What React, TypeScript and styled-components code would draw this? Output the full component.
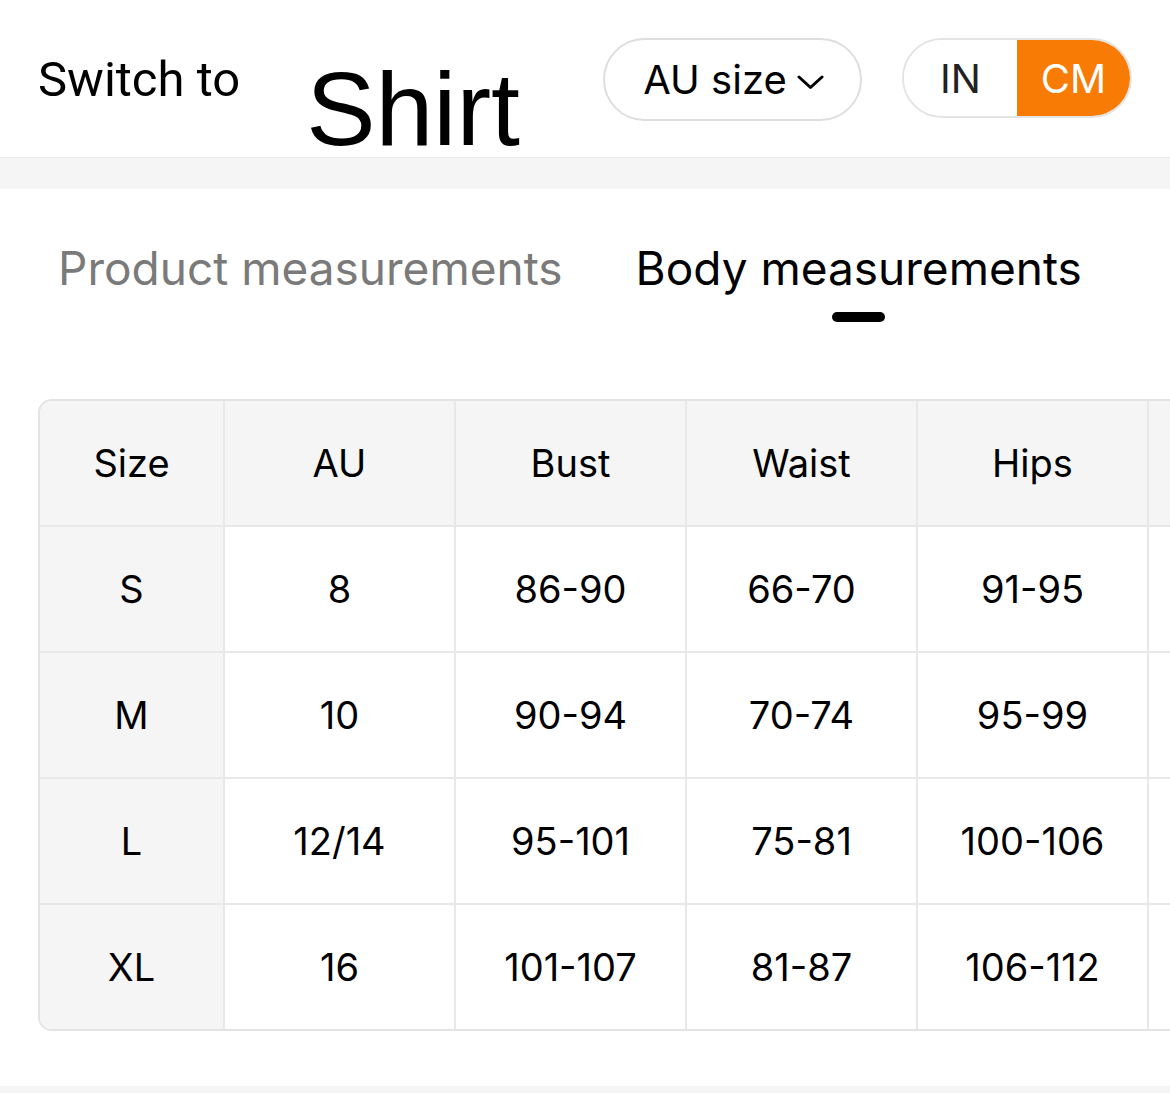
import React from "react";
import styled, { createGlobalStyle } from "styled-components";

const Global = createGlobalStyle`
  html, body { margin: 0; padding: 0; background: #fff; overflow: hidden; }
  body { font-family: Inter, "Noto Sans", sans-serif; color: #000; }
  * { box-sizing: border-box; }
`;

const Page = styled.div`
  width: 1170px;
  height: 1093px;
  display: flex;
  flex-direction: column;
  background: #fff;
  overflow: hidden;
`;

const Header = styled.header`
  height: 158px;
  flex: none;
  display: flex;
  align-items: flex-start;
  padding-left: 38px;
  border-bottom: 1px solid #ebebeb;
`;

const SwitchLabel = styled.div`
  font-family: Roboto, "Liberation Sans", sans-serif;
  font-size: 49px;
  line-height: 56px;
  margin-top: 52px;
  white-space: nowrap;
`;

const ProductName = styled.div`
  font-family: "Liberation Sans", Arial, sans-serif;
  font-size: 104px;
  line-height: 120px;
  margin-top: 49px;
  margin-left: 66px;
  white-space: nowrap;
`;

const SizeButton = styled.button`
  margin-top: 38px;
  margin-left: 83px;
  width: 259px;
  height: 83px;
  border: 2px solid #dedede;
  border-radius: 42px;
  background: #fff;
  display: flex;
  align-items: center;
  justify-content: center;
  gap: 10px;
  padding: 0 0 0 2px;
  font-family: Inter, sans-serif;
  font-size: 40px;
  color: #000;
`;

const Chevron = styled.svg`
  width: 27px;
  height: 15px;
  margin-top: 6px;
`;

const UnitToggle = styled.div`
  margin-top: 38px;
  margin-left: 40px;
  width: 230px;
  height: 80px;
  border: 2px solid #e4e4e4;
  border-radius: 40px;
  overflow: hidden;
  display: flex;
`;

const UnitOption = styled.div<{ $active?: boolean }>`
  flex: 1;
  display: flex;
  align-items: center;
  justify-content: center;
  font-family: Inter, sans-serif;
  font-size: 40px;
  background: ${(p) => (p.$active ? "#f77b04" : "#fff")};
  color: ${(p) => (p.$active ? "#fff" : "#222")};
`;

const Band = styled.div<{ $h: number }>`
  height: ${(p) => p.$h}px;
  flex: none;
  background: #f5f5f5;
`;

const Tabs = styled.nav`
  display: flex;
  gap: 73px;
  padding: 52px 0 0 58px;
`;

const Tab = styled.div<{ $active?: boolean }>`
  display: flex;
  flex-direction: column;
  align-items: center;
  font-family: Inter, sans-serif;
  font-size: 46px;
  line-height: 54px;
  color: ${(p) => (p.$active ? "#000" : "#7a7a7a")};
  white-space: nowrap;
`;

const Indicator = styled.div<{ $show?: boolean }>`
  margin-top: 17px;
  width: 53px;
  height: 10px;
  border-radius: 5px;
  background: ${(p) => (p.$show ? "#000" : "transparent")};
`;

const TableWrap = styled.div`
  margin: 77px 0 0 38px;
  width: 1400px;
  border: 2px solid #e3e3e3;
  border-radius: 14px;
  overflow: hidden;
  flex: none;
`;

const Grid = styled.div`
  display: grid;
  grid-template-columns: 185px repeat(6, 231px);
`;

const Cell = styled.div<{ $shade?: boolean; $last?: boolean }>`
  height: ${(p) => (p.$last ? 124 : 126)}px;
  display: flex;
  align-items: center;
  justify-content: center;
  border-right: 2px solid #e8e8e8;
  border-bottom: ${(p) => (p.$last ? "none" : "2px solid #e8e8e8")};
  background: ${(p) => (p.$shade ? "#f5f5f5" : "#fff")};
  font-family: Inter, sans-serif;
  font-size: 38px;
  color: #000;
  white-space: nowrap;
`;

const Spacer = styled.div`
  flex: 1;
`;

const headers = ["Size", "AU", "Bust", "Waist", "Hips"];
const rows = [
  ["S", "8", "86-90", "66-70", "91-95"],
  ["M", "10", "90-94", "70-74", "95-99"],
  ["L", "12/14", "95-101", "75-81", "100-106"],
  ["XL", "16", "101-107", "81-87", "106-112"],
];

export default function App() {
  return (
    <Page>
      <Global />
      <Header>
        <SwitchLabel>Switch to</SwitchLabel>
        <ProductName>Shirt</ProductName>
        <SizeButton>
          AU size
          <Chevron viewBox="0 0 27 15" fill="none">
            <polyline points="2,2 13.5,12.5 25,2" stroke="#000" strokeWidth="3" strokeLinecap="round" strokeLinejoin="round" />
          </Chevron>
        </SizeButton>
        <UnitToggle>
          <UnitOption>IN</UnitOption>
          <UnitOption $active>CM</UnitOption>
        </UnitToggle>
      </Header>
      <Band $h={31} />
      <Tabs>
        <Tab>
          Product measurements
          <Indicator />
        </Tab>
        <Tab $active>
          Body measurements
          <Indicator $show />
        </Tab>
      </Tabs>
      <TableWrap>
        <Grid>
          {headers.map((h) => (
            <Cell key={h} $shade>
              {h}
            </Cell>
          ))}
          <Cell $shade />
          <Cell $shade />
          {rows.map((r, ri) => (
            <React.Fragment key={r[0]}>
              {r.map((v, ci) => (
                <Cell key={ci} $shade={ci === 0} $last={ri === rows.length - 1}>
                  {v}
                </Cell>
              ))}
              <Cell $last={ri === rows.length - 1} />
              <Cell $last={ri === rows.length - 1} />
            </React.Fragment>
          ))}
        </Grid>
      </TableWrap>
      <Spacer />
      <Band $h={7} />
    </Page>
  );
}
